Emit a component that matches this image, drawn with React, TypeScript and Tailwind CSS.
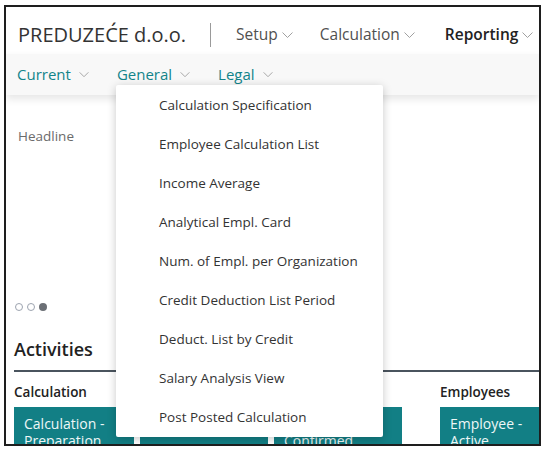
import React from 'react';

const font = { fontFamily: '"Open Sans", "Noto Sans", sans-serif' };

function Chevron({ className = '' }: { className?: string }) {
  return (
    <svg viewBox="0 0 12 8" className={className} fill="none" stroke="currentColor" strokeWidth="1">
      <path d="M1 1.5 L6 6.5 L11 1.5" />
    </svg>
  );
}

const menuItems = [
  'Calculation Specification',
  'Employee Calculation List',
  'Income Average',
  'Analytical Empl. Card',
  'Num. of Empl. per Organization',
  'Credit Deduction List Period',
  'Deduct. List by Credit',
  'Salary Analysis View',
  'Post Posted Calculation',
];

const tile = 'shrink-0 h-[60px] bg-[#127f85] text-[#eef7f7] text-[14px] leading-[17px] px-[10px] pt-[8px]';

export default function App() {
  return (
    <div className="w-[547px] h-[451px] bg-white overflow-hidden pl-[4px] pt-[5px]" style={font}>
      <div className="relative w-[537px] h-[441px] border-2 border-[#1e1e1e] overflow-hidden bg-white">
        {/* top bar */}
        <div className="h-[47px] flex items-center pt-[8px] pl-[12px] text-[#505050]">
          <span className="text-[20px] text-[#333]">PREDUZEĆE d.o.o.</span>
          <div className="ml-[24px] w-px h-[24px] bg-[#9a9a9a]" />
          <div className="ml-[25px] flex items-center gap-[2px] text-[15.5px]">
            Setup <Chevron className="w-[13px] h-[8px] text-[#a0a0a0] ml-[1px]" />
          </div>
          <div className="ml-[26px] flex items-center gap-[2px] text-[15.5px]">
            Calculation <Chevron className="w-[13px] h-[8px] text-[#a0a0a0] ml-[1px]" />
          </div>
          <div className="ml-[29px] flex items-center gap-[2px] text-[15.5px] font-semibold text-[#222]">
            Reporting <Chevron className="w-[13px] h-[8px] text-[#a0a0a0] ml-[1px]" />
          </div>
        </div>

        {/* sub bar */}
        <div className="h-[41px] bg-[#f8f8f8] flex items-center pl-[11px] text-[15px] text-[#12848a] shadow-[0_4px_8px_rgba(0,0,0,0.10)] relative">
          <div className="flex items-center gap-[7px]">
            Current <Chevron className="w-[12px] h-[7px] text-[#9a9a9a]" />
          </div>
          <div className="ml-[27px] flex items-center gap-[7px]">
            General <Chevron className="w-[12px] h-[7px] text-[#9a9a9a]" />
          </div>
          <div className="ml-[27px] flex items-center gap-[7px]">
            Legal <Chevron className="w-[12px] h-[7px] text-[#9a9a9a]" />
          </div>
        </div>

        {/* headline area */}
        <div className="h-[221px] pl-[12px] pt-[31px] flex flex-col">
          <div className="text-[13.5px] text-[#6b6b6b]">Headline</div>
          <div className="mt-auto mb-[5px] -ml-[3px] flex items-center gap-[4px]">
            <span className="w-[8px] h-[8px] rounded-full border border-[#9ca3af]" />
            <span className="w-[8px] h-[8px] rounded-full border border-[#9ca3af]" />
            <span className="w-[8px] h-[8px] rounded-full bg-[#6b6f75]" />
          </div>
        </div>

        {/* activities */}
        <div className="pl-[8px] pt-[21px]">
          <div className="text-[18px] font-semibold text-[#222] leading-[24px]">Activities</div>
          <div className="mt-[9px] h-[2px] bg-[#4a545e]" />
          <div className="flex mt-[10px]">
            <div className="w-[426px] shrink-0">
              <div className="text-[13.5px] font-semibold text-[#222] leading-[20px]">Calculation</div>
              <div className="flex gap-[6px] mt-[5px]">
                <div className={`${tile} w-[120px]`}>Calculation - Preparation</div>
                <div className={`${tile} w-[128px]`}>Posted Calc.</div>
                <div className={`${tile} w-[128px]`}>Calculation Confirmed</div>
              </div>
            </div>
            <div className="shrink-0">
              <div className="text-[13.5px] font-semibold text-[#222] leading-[20px]">Employees</div>
              <div className="flex gap-[6px] mt-[5px]">
                <div className={`${tile} w-[120px]`}>Employee - Active</div>
              </div>
            </div>
          </div>
        </div>

        {/* dropdown menu */}
        <div className="absolute left-[110px] top-[78px] w-[267px] h-[352px] pt-[1px] bg-white shadow-[0_2px_10px_rgba(0,0,0,0.22)] rounded-[2px]">
          {menuItems.map((item) => (
            <div key={item} className="h-[39px] flex items-center pl-[43px] text-[13.5px] text-[#333]">
              {item}
            </div>
          ))}
        </div>
      </div>
    </div>
  );
}
